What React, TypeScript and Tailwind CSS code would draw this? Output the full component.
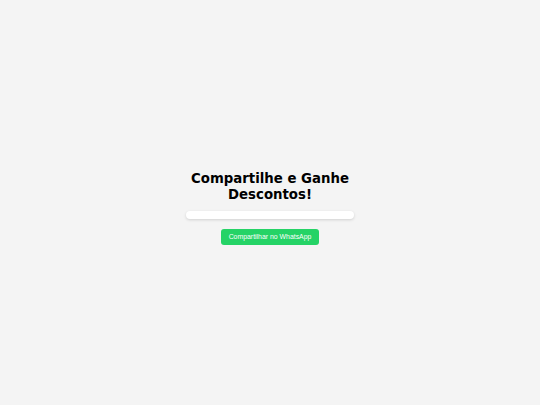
import React from "react";

export default function App() {
  return (
    <div className="min-h-screen w-full bg-[#f4f4f4] flex items-center justify-center">
      <div className="flex flex-col items-center w-[170px] pt-[11px]">
        <h2 className="text-[13.3px] leading-[16px] font-bold text-black text-center [font-family:'DejaVu_Sans',sans-serif]">
          Compartilhe e Ganhe Descontos!
        </h2>
        <div className="mt-[8px] w-[168px] h-[8px] rounded-[5px] bg-white shadow-[0_1px_3px_rgba(0,0,0,0.15)]"></div>
        <button className="mt-[10px] w-[98px] h-[16px] rounded-[3px] bg-[#25d366] text-white text-[6.9px] [font-family:'Liberation_Sans',Arial,sans-serif] flex items-center justify-center">
          Compartilhar no WhatsApp
        </button>
      </div>
    </div>
  );
}
